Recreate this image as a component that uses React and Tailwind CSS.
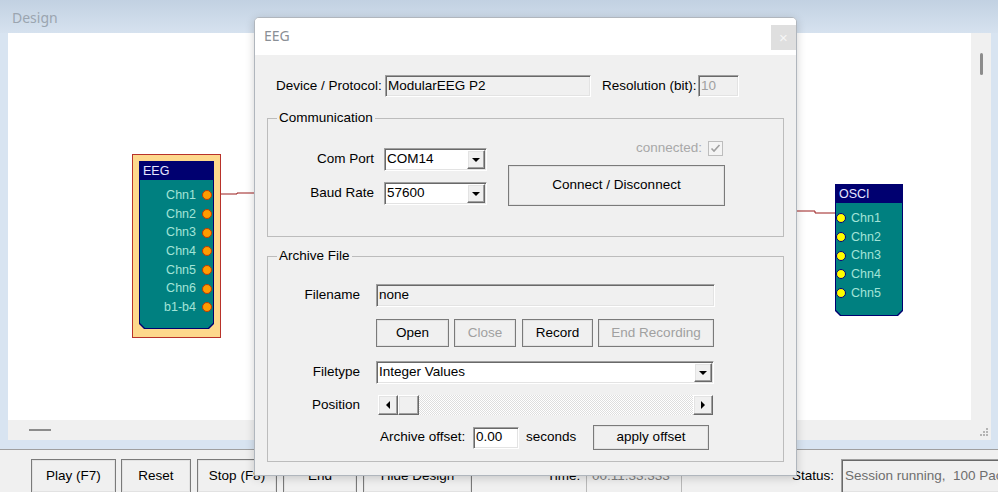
import React from "react";

const sunken =
  "border border-t-[#a0a0a0] border-l-[#a0a0a0] border-r-white border-b-white shadow-[inset_1px_1px_0_#696969,inset_-1px_-1px_0_#e3e3e3]";
const raised =
  "border border-t-white border-l-white border-r-[#696969] border-b-[#696969] shadow-[inset_-1px_-1px_0_#a0a0a0,inset_1px_1px_0_#e3e3e3] bg-[#f0f0f0]";
const btn =
  "shrink-0 flex items-center justify-center border border-[#7a7a7a] bg-[#f0f0f0] shadow-[inset_0_0_0_1px_#e2e2e2]";
const chamfer =
  "[clip-path:polygon(0_0,100%_0,100%_calc(100%_-_5px),calc(100%_-_5px)_100%,5px_100%,0_calc(100%_-_5px))]";

function Combo({ value, className }) {
  return (
    <div className={`${sunken} bg-white flex p-[1px] ${className}`}>
      <div className="flex-1 flex items-center pl-[1px]">{value}</div>
      <div className={`${raised} w-[18px] flex items-center justify-center`}>
        <div className="w-0 h-0 border-x-[4px] border-x-transparent border-t-[4px] border-t-black" />
      </div>
    </div>
  );
}

function Node({ title, channels, dotsLeft, className, height }) {
  return (
    <div className={`bg-[#000070] p-[1px] ${chamfer} ${height} ${className}`}>
      <div className={`h-full bg-[#008080] flex flex-col ${chamfer}`}>
        <div className="h-[18px] bg-[#000070] pl-[3px] flex items-center text-[12.5px] text-[#e6e6ff]">
          {title}
        </div>
        <div className="pt-[6px] flex flex-col">
          {channels.map((c) =>
            dotsLeft ? (
              <div key={c} className="h-[18.67px] flex items-center">
                <div className="w-[10px] h-[10px] rounded-full bg-[#ffff00] border border-[#000080]" />
                <span className="ml-[5px] text-[12.5px] text-[#a3e4d7]">{c}</span>
              </div>
            ) : (
              <div key={c} className="h-[18.67px] flex items-center justify-end pr-[1px]">
                <span className="text-[12.5px] text-[#a3e4d7]">{c}</span>
                <div className="ml-[6px] w-[10px] h-[10px] rounded-full bg-[#ff9c00] border border-[#c23a00]" />
              </div>
            )
          )}
        </div>
      </div>
    </div>
  );
}

export default function App() {
  return (
    <div className="relative w-[998px] h-[492px] overflow-hidden bg-[#f0f0f0] font-['Liberation_Sans',Arial,sans-serif] text-[13.5px] text-black">
      {/* Design window */}
      <div className="h-[449px] flex flex-col bg-[#d8e4f1]">
        <div className="h-[33px] bg-linear-to-b from-[#c2d1e2] to-[#d6e2ef] pl-[12px] pt-[8px] font-['Noto_Sans',sans-serif] text-[14px] leading-[20px] text-[#9ba5b0]">
          Design
        </div>
        <div className="flex h-[387px] pl-[8px] pr-[7px]">
          <div className="relative flex-1 bg-white overflow-hidden">
            <svg className="absolute inset-0 w-full h-full" viewBox="0 0 963 387">
              <polyline points="204,161 229,161 229,160 250,160" fill="none" stroke="#9b1c1c" strokeWidth="1" />
              <polyline points="785,178 807,178 807,180 830,180" fill="none" stroke="#9b1c1c" strokeWidth="1" />
            </svg>

            <div className="absolute left-[124px] top-[121px] w-[89px] h-[184px] border border-[#b8322a] bg-[#fdd88c] pt-[6px] px-[6px]">
              <Node
                title="EEG"
                height="h-[168px]"
                channels={["Chn1", "Chn2", "Chn3", "Chn4", "Chn5", "Chn6", "b1-b4"]}
              />
            </div>

            <Node
              title="OSCI"
              dotsLeft
              height="h-[132px]"
              className="absolute left-[827px] top-[151px] w-[68px]"
              channels={["Chn1", "Chn2", "Chn3", "Chn4", "Chn5"]}
            />
          </div>
          <div className="w-[20px] bg-[#f0f0f0] pt-[20px]">
            <div className="mx-auto w-[3px] h-[22px] bg-[#8c8c8c] rounded-full" />
          </div>
        </div>
        <div className="flex h-[20px] pl-[8px] pr-[7px]">
          <div className="flex-1 bg-[#f0f0f0] pl-[21px] pt-[9px]">
            <div className="w-[22px] h-[2px] bg-[#8c8c8c]" />
          </div>
          <div className="w-[20px] bg-[#f0f0f0]">
            <svg width="20" height="20" viewBox="0 0 20 20">
              {[
                [15, 8],
                [12, 11],
                [15, 11],
                [9, 14],
                [12, 14],
                [15, 14],
              ].map(([x, y]) => (
                <rect key={`${x}-${y}`} x={x} y={y} width="2" height="2" fill="#b4b4b4" />
              ))}
            </svg>
          </div>
        </div>
      </div>

      {/* toolbar */}
      <div className="h-[43px] border-t border-[#9f9f9f] flex items-start pt-[9px] pl-[31px] overflow-hidden">
        <div className={`${btn} h-[34px] w-[85px]`}>Play (F7)</div>
        <div className={`${btn} h-[34px] w-[70px] ml-[5px]`}>Reset</div>
        <div className={`${btn} h-[34px] w-[80px] ml-[6px]`}>Stop (F8)</div>
        <div className={`${btn} h-[34px] w-[74px] ml-[6px]`}>End</div>
        <div className={`${btn} h-[34px] w-[109px] ml-[6px]`}>Hide Design</div>
        <div className="shrink-0 h-[34px] w-[39px] ml-[75px] flex items-center">Time:</div>
        <div className="shrink-0 h-[34px] w-[96px] border border-[#b9b9b9] flex items-center pl-[5px] text-[#808080]">
          00:11:33.333
        </div>
        <div className="shrink-0 h-[34px] w-[49px] ml-[110px] flex items-center">Status:</div>
        <div className={`${sunken} shrink-0 h-[34px] w-[200px] bg-[#f0f0f0] flex items-center pl-[3px] text-[#6e6e6e] whitespace-pre overflow-hidden`}>
          Session running,  100 Packets/s
        </div>
      </div>

      {/* EEG dialog */}
      <div className="absolute left-[254px] top-[17px] w-[543px] h-[459px] bg-[#f0f0f0] border border-[#b0b6bd] rounded-t-[5px] shadow-[0_2px_10px_rgba(0,0,0,0.18)] flex flex-col overflow-hidden">
        <div className="h-[37px] shrink-0 bg-white flex items-start justify-between">
          <div className="mt-[8px] pl-[9px] font-['Noto_Sans',sans-serif] text-[14px] leading-[20px] text-[#8a8f96]">
            EEG
          </div>
          <div className="mt-[7px] w-[25px] h-[25px] bg-[#dfdfdf] flex items-center justify-center text-[15px] leading-none text-[#f6f6f6]">
            ×
          </div>
        </div>

        <div className="flex flex-col">
          <div className="mt-[20px] ml-[21px] h-[22px] flex items-center">
            <div className="w-[109px] whitespace-nowrap">Device / Protocol:</div>
            <div className={`${sunken} w-[206px] h-[22px] bg-[#f0f0f0] flex items-center pl-[2px]`}>
              ModularEEG P2
            </div>
            <div className="ml-[11px] w-[96px] whitespace-nowrap">Resolution (bit):</div>
            <div className={`${sunken} w-[41px] h-[22px] bg-[#f0f0f0] flex items-center pl-[2px] text-[#a0a0a0]`}>
              10
            </div>
          </div>

          <fieldset className="mt-[13px] ml-[12px] w-[517px] border border-[#bcbcbc]">
            <legend className="ml-[9px] px-[2px] leading-[16px]">Communication</legend>
            <div className="h-[110px] flex items-start">
              <div className="mt-[22px] flex flex-col gap-[11px]">
                <div className="flex items-center h-[23px]">
                  <div className="w-[106px] text-right">Com Port</div>
                  <Combo value="COM14" className="ml-[10px] w-[103px] h-[23px]" />
                </div>
                <div className="flex items-center h-[23px]">
                  <div className="w-[106px] text-right">Baud Rate</div>
                  <Combo value="57600" className="ml-[10px] w-[103px] h-[23px]" />
                </div>
              </div>
              <div className="ml-[21px] w-[217px] mt-[15px] flex flex-col">
                <div className="h-[15px] flex items-center justify-end pr-[2px]">
                  <span className="text-[#a8a8a8] mr-[6px]">connected:</span>
                  <div className="w-[15px] h-[15px] border border-[#bdbdbd] bg-[#f4f4f4] flex items-center justify-center">
                    <svg width="11" height="11" viewBox="0 0 11 11">
                      <polyline points="1.5,5.5 4,8 9.5,2" fill="none" stroke="#a0a0a0" strokeWidth="1.6" />
                    </svg>
                  </div>
                </div>
                <div className={`${btn} mt-[9px] h-[41px]`}>Connect / Disconnect</div>
              </div>
            </div>
          </fieldset>

          <fieldset className="mt-[11px] ml-[12px] w-[517px] border border-[#bcbcbc]">
            <legend className="ml-[9px] px-[2px] leading-[16px]">Archive File</legend>
            <div className="h-[197px] flex flex-col">
              <div className="mt-[20px] h-[23px] flex items-center">
                <div className="w-[92px] text-right">Filename</div>
                <div className={`${sunken} ml-[16px] w-[339px] h-[23px] bg-[#f0f0f0] flex items-center pl-[2px]`}>
                  none
                </div>
              </div>
              <div className="mt-[12px] h-[28px] pl-[108px] flex">
                <div className={`${btn} w-[73px]`}>Open</div>
                <div className={`${btn} w-[62px] ml-[5px] text-[#a0a0a0]`}>Close</div>
                <div className={`${btn} w-[71px] ml-[6px]`}>Record</div>
                <div className={`${btn} w-[116px] ml-[5px] text-[#a0a0a0]`}>End Recording</div>
              </div>
              <div className="mt-[14px] h-[23px] flex items-center">
                <div className="w-[92px] text-right">Filetype</div>
                <Combo value="Integer Values" className="ml-[16px] w-[338px] h-[23px]" />
              </div>
              <div className="mt-[11px] h-[20px] flex items-center">
                <div className="w-[92px] text-right">Position</div>
                <div className="ml-[18px] w-[335px] h-[20px] flex">
                  <div className={`${raised} w-[20px] flex items-center justify-center`}>
                    <div className="w-0 h-0 border-y-[4px] border-y-transparent border-r-[4px] border-r-black" />
                  </div>
                  <div className={`${raised} w-[21px]`} />
                  <div className="flex-1 [background-image:repeating-conic-gradient(#ffffff_0%_25%,#dedede_0%_50%)] [background-size:2px_2px]" />
                  <div className={`${raised} w-[20px] flex items-center justify-center`}>
                    <div className="w-0 h-0 border-y-[4px] border-y-transparent border-l-[4px] border-l-black" />
                  </div>
                </div>
              </div>
              <div className="mt-[10px] h-[25px] flex items-center pl-[112px]">
                <div className="w-[93px] whitespace-nowrap">Archive offset:</div>
                <div className={`${sunken} w-[46px] h-[22px] bg-white flex items-center pl-[2px]`}>0.00</div>
                <div className="ml-[7px] w-[67px]">seconds</div>
                <div className={`${btn} w-[116px] h-[25px]`}>apply offset</div>
              </div>
            </div>
          </fieldset>
        </div>
      </div>
    </div>
  );
}
